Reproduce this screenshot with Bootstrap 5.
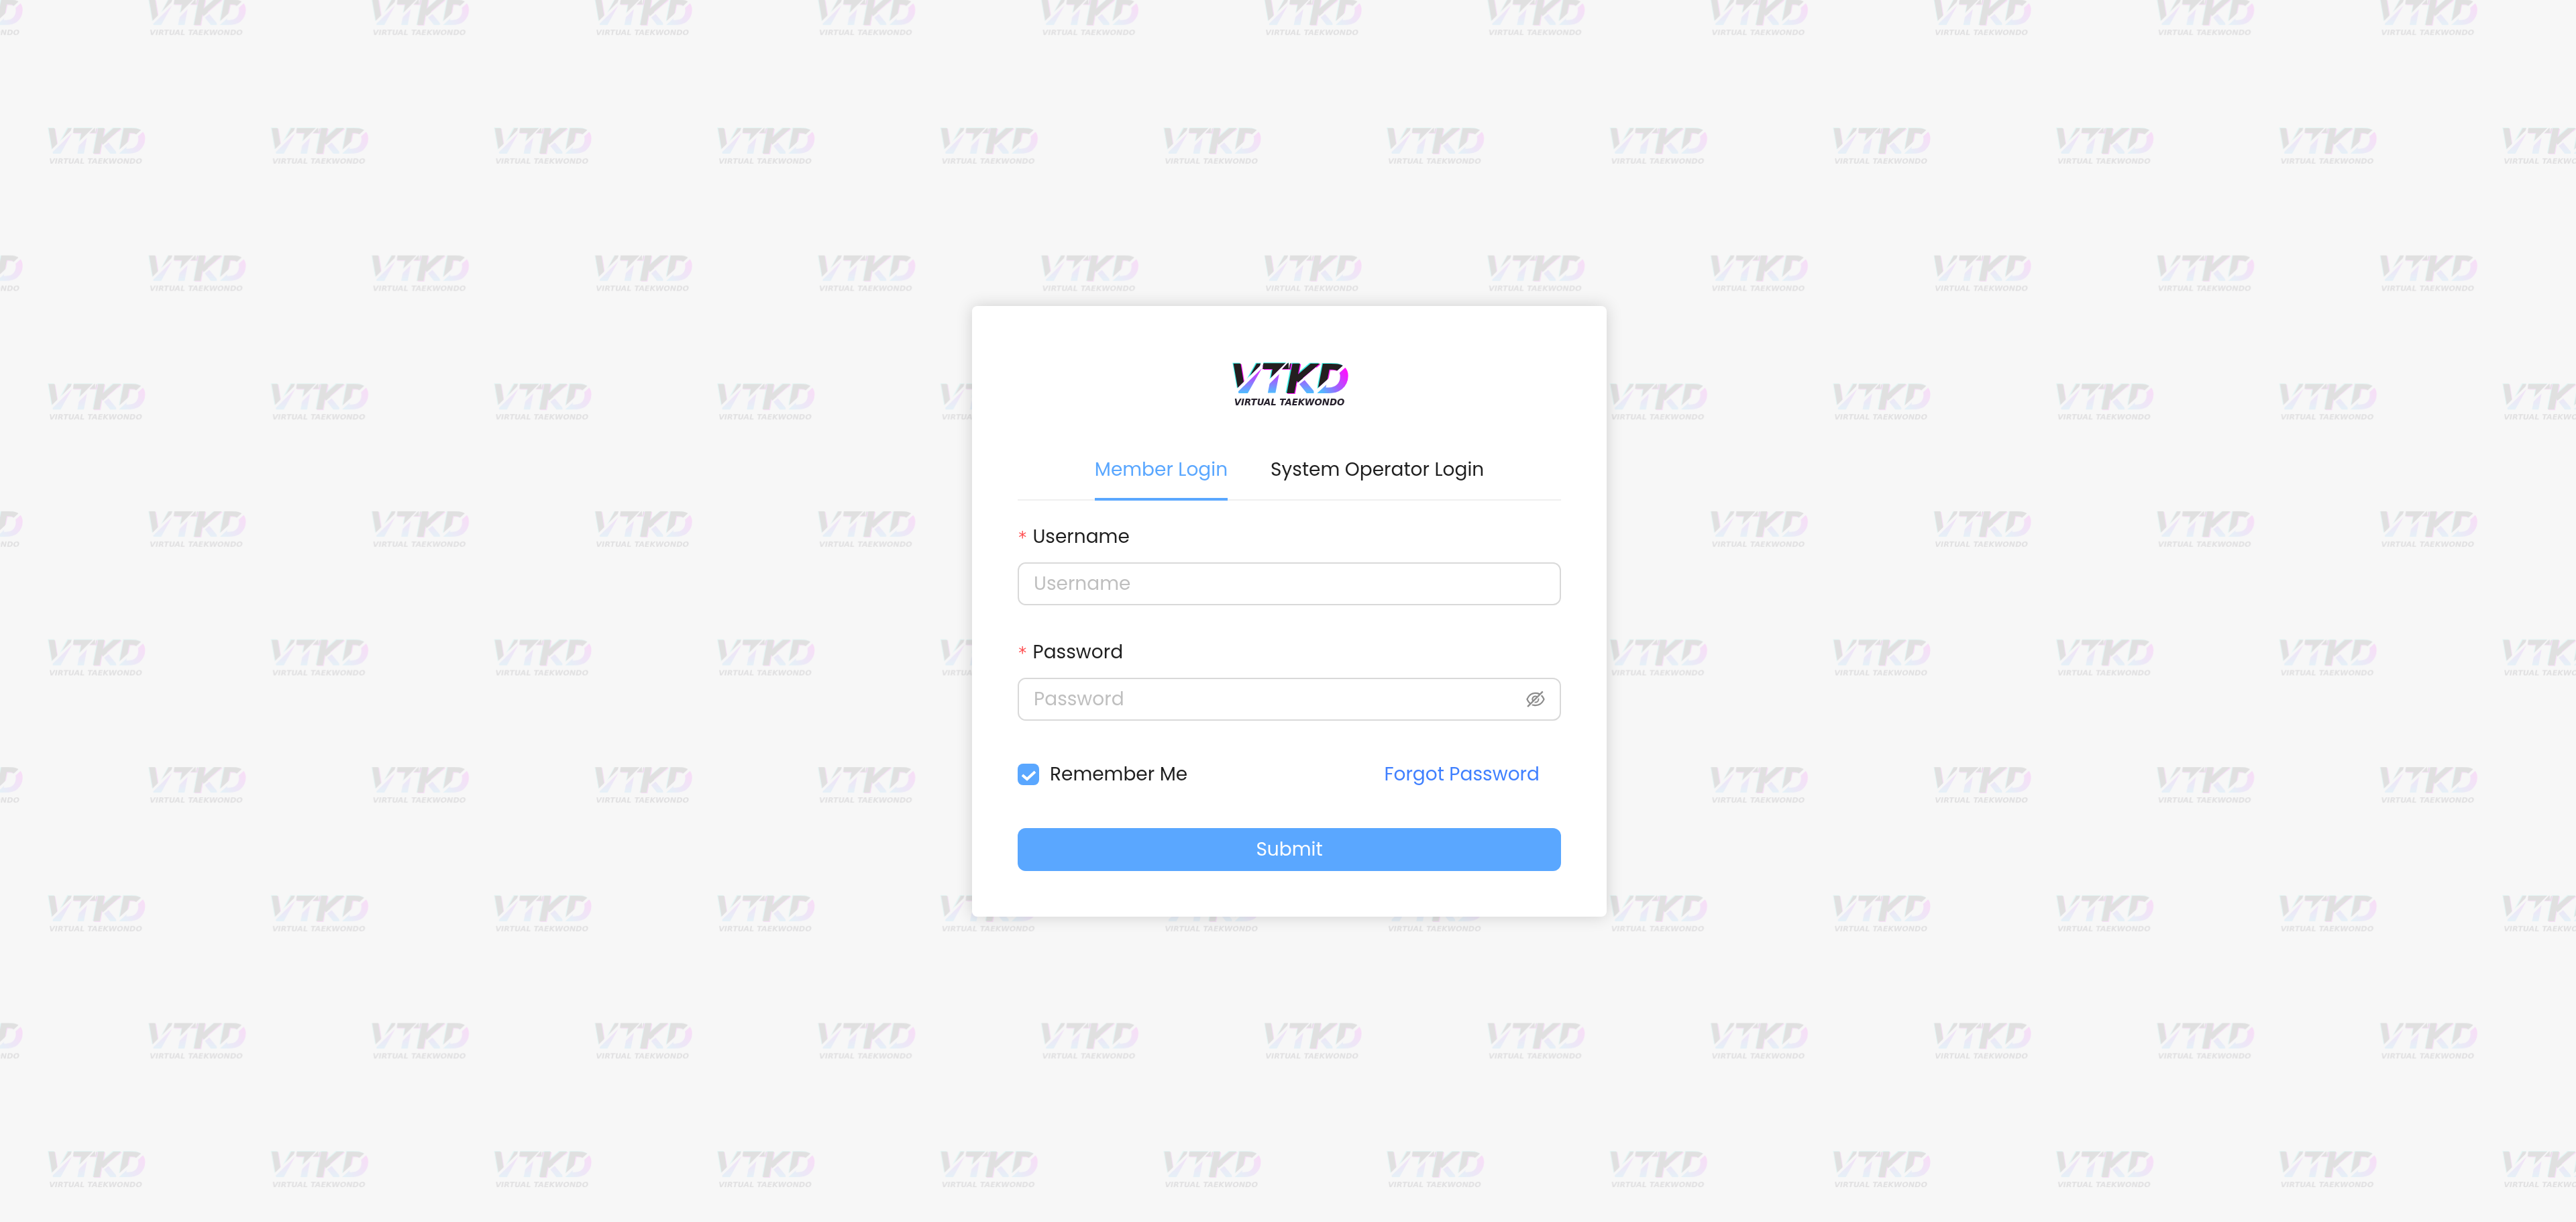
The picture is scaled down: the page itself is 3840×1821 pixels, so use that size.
<!DOCTYPE html>
<html lang="en">
<head>
<meta charset="utf-8">
<meta name="viewport" content="width=device-width, initial-scale=1">
<title>VTKD Login</title>
<link href="https://cdn.jsdelivr.net/npm/bootstrap@5.3.0/dist/css/bootstrap.min.css" rel="stylesheet">
<style>
  :root { --vt-blue: #5aa7ff; --vt-link: #4080ff; --vt-text: #1f1f1f; }
  body { background: #f7f7f7; color: var(--vt-text); font-family: Poppins, Inter, "Noto Sans", sans-serif; font-size: 28px; line-height: 44px; }
  .watermark { z-index: 0; opacity: .1; }
  .logo-word { font-family: "DejaVu Sans", sans-serif; font-weight: 700; font-style: oblique; font-size: 182px; }
  .logo-sub { font-family: "DejaVu Sans", sans-serif; font-weight: 700; font-style: oblique; font-size: 40px; }
  .login-card { width: 100%; max-width: 946px; padding: 68px; border: 0; border-radius: 8px; box-shadow: 0 0 24px rgba(0, 0, 0, .16); }
  .brand { width: 184px; height: 66px; margin: 16px auto 48px; }
  .login-tabs { gap: 64px; border-bottom: 2px solid #f0f0f0; margin-bottom: 32px; }
  .login-tabs .nav-link { padding: 24px 0 20px; font-size: 28px; line-height: 44px; color: var(--vt-text); background: none; border: 0; border-bottom: 4px solid transparent; border-radius: 0; margin-bottom: -2px; }
  .login-tabs .nav-link.active { color: var(--vt-blue); border-bottom-color: var(--vt-blue); }
  .field { margin-bottom: 48px; }
  .field .form-label { display: flex; align-items: baseline; gap: 8px; height: 44px; margin-bottom: 16px; }
  .required-mark { color: #ff4d4f; font-family: "DejaVu Sans Mono", monospace; font-size: 24px; }
  .field .form-control { height: 64px; padding: 8px 22px; font-size: 28px; line-height: 44px; border: 2px solid #d9d9d9; border-radius: 12px; color: var(--vt-text); }
  .field .form-control::placeholder { color: #bfbfbf; opacity: 1; }
  .eye-toggle { right: 24px; line-height: 0; color: #8c8c8c; }
  .options { height: 64px; margin-bottom: 48px; padding-right: 32px; }
  .options .form-check-input { width: 32px; height: 32px; margin: 0; border: 0; border-radius: 8px; background-color: #d9d9d9; }
  .options .form-check-input:checked { background-color: var(--vt-blue); background-size: 32px 32px; background-image: url("data:image/svg+xml,%3Csvg xmlns='http://www.w3.org/2000/svg' viewBox='0 0 32 32'%3E%3Cpath d='M7 17l7 6L26 12' fill='none' stroke='%23fff' stroke-width='4'/%3E%3C/svg%3E"); }
  .options a { color: var(--vt-link); }
  .btn-submit { --bs-btn-color: #fff; --bs-btn-bg: #5aa7ff; --bs-btn-hover-color: #fff; --bs-btn-hover-bg: #7dbbff; --bs-btn-active-bg: #4088d9; height: 64px; padding: 8px; border: 0; border-radius: 12px; font-size: 28px; line-height: 44px; }
</style>
</head>
<body>

<svg class="watermark position-fixed top-0 start-0 w-100 h-100" aria-hidden="true">
  <defs>
    <linearGradient id="neon" gradientUnits="userSpaceOnUse" x1="0" y1="200" x2="0" y2="70">
      <stop offset="0" stop-color="#49c4ff"/><stop offset=".5" stop-color="#a060ff"/><stop offset="1" stop-color="#ff10ff"/>
    </linearGradient>
    <linearGradient id="neonWide" gradientUnits="userSpaceOnUse" x1="450" y1="200" x2="570" y2="105">
      <stop offset="0" stop-color="#49c4ff"/><stop offset=".5" stop-color="#a060ff"/><stop offset="1" stop-color="#ff10ff"/>
    </linearGradient>
    <!-- Dark part of each letter, above its slash -->
    <clipPath id="cutDark">
      <path d="M30 50H186L178 74L70 180H30ZM196 50H304L212 142V100H187ZM307 56V90H276ZM316 50H450V62L344 152L338 205H284ZM430 50H556V66L434 176Z"/>
    </clipPath>
    <!-- Neon part of each letter, below its slash -->
    <clipPath id="cutNeon">
      <path d="M64 205L186 86V205ZM188 187L270 105V205H188ZM352 205V158L420 104V205Z"/>
    </clipPath>
    <clipPath id="cutNeonWide">
      <path d="M424 205L590 54V205Z"/>
    </clipPath>
    <symbol id="logo" viewBox="34 58 552 198">
      <g clip-path="url(#cutDark)">
        <text class="logo-word" x="42 178 290 426" y="194" fill="#3ff0e8">VTKD</text>
        <text class="logo-word" x="50 186 298 434" y="198" fill="#ff10ff">VTKD</text>
        <text class="logo-word" x="46 182 294 430" y="196" fill="#231f20">VTKD</text>
      </g>
      <text class="logo-word" x="46 182 294 430" y="196" fill="url(#neon)" clip-path="url(#cutNeon)">VTKD</text>
      <text class="logo-word" x="46 182 294 430" y="196" fill="url(#neonWide)" clip-path="url(#cutNeonWide)">VTKD</text>
      <text class="logo-sub" x="63" y="249" fill="#26202c">VIRTUAL TAEKWONDO</text>
    </symbol>
    <pattern id="tiles" patternUnits="userSpaceOnUse" x="41" y="172" width="332.65" height="381.3">
      <use href="#logo" x="24" y="18" width="155" height="56"/>
      <use href="#logo" x="174" y="208" width="155" height="56"/>
    </pattern>
  </defs>
  <rect width="100%" height="100%" fill="url(#tiles)"/>
</svg>

<main class="position-relative min-vh-100 d-flex align-items-center justify-content-center ps-1">
  <div class="card login-card">
    <svg class="brand d-block" role="img" aria-label="VTKD Virtual Taekwondo"><use href="#logo" width="184" height="66"/></svg>

    <div class="nav login-tabs justify-content-center" role="tablist">
      <button class="nav-link active" type="button" role="tab" aria-selected="true">Member Login</button>
      <button class="nav-link" type="button" role="tab" aria-selected="false">System Operator Login</button>
    </div>

    <form>
      <div class="field">
        <label class="form-label" for="username"><span class="required-mark">*</span>Username</label>
        <input class="form-control" id="username" type="text" placeholder="Username" required>
      </div>
      <div class="field">
        <label class="form-label" for="password"><span class="required-mark">*</span>Password</label>
        <div class="position-relative">
          <input class="form-control" id="password" type="password" placeholder="Password" required>
          <button class="eye-toggle btn p-0 border-0 position-absolute top-50 translate-middle-y" type="button" aria-label="Show password">
            <svg width="28" height="28" viewBox="64 64 896 896" fill="currentColor" aria-hidden="true">
              <path d="M942.2 486.2Q889.47 375.11 816.7 305l-50.88 50.88C807.31 395.53 843.45 447.4 874.7 512 791.5 684.2 673.4 766 512 766q-72.67 0-133.87-22.38L323 798.75Q408 838 512 838q288.3 0 430.2-300.3a60.29 60.29 0 000-51.5zm-63.57-320.64L836 122.88a8 8 0 00-11.32 0L715.31 232.2Q624.86 186 512 186q-288.3 0-430.2 300.3a60.3 60.3 0 000 51.5q56.69 119.4 136.5 191.41L112.48 835a8 8 0 000 11.31L155.17 889a8 8 0 0011.31 0l712.15-712.12a8 8 0 000-11.32zM149.3 512C232.6 339.8 350.7 258 512 258c54.54 0 104.13 9.36 149.12 28.39l-70.3 70.3a176 176 0 00-238.13 238.13l-83.42 83.42C223.1 637.49 183.3 582.28 149.3 512zm246.7 0a112.11 112.11 0 01146.2-106.69L401.31 546.2A112 112 0 01396 512z"/>
              <path d="M508 624c-3.46 0-6.87-.16-10.25-.47l-52.82 52.82a176.09 176.09 0 00227.42-227.42l-52.82 52.82c.31 3.38.47 6.79.47 10.25a111.94 111.94 0 01-112 112z"/>
            </svg>
          </button>
        </div>
      </div>
      <div class="options d-flex align-items-center justify-content-between">
        <div class="d-flex align-items-center gap-3">
          <input class="form-check-input" id="remember" type="checkbox" checked>
          <label for="remember">Remember Me</label>
        </div>
        <a class="text-decoration-none" href="#">Forgot Password</a>
      </div>
      <button class="btn btn-submit w-100" type="submit">Submit</button>
    </form>
  </div>
</main>

<script src="https://cdn.jsdelivr.net/npm/bootstrap@5.3.0/dist/js/bootstrap.bundle.min.js"></script>
</body>
</html>
